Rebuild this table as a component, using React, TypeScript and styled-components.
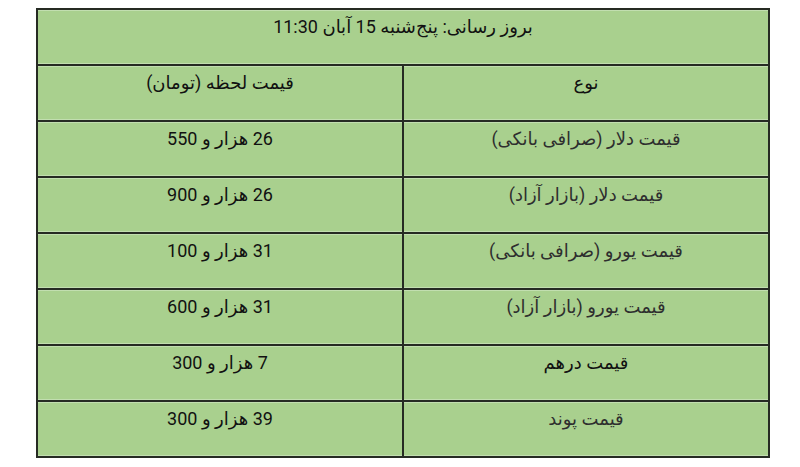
import React from "react";
import styled, { createGlobalStyle } from "styled-components";

const Global = createGlobalStyle`
  html, body { margin: 0; padding: 0; background: #ffffff; }
  body { font-family: Roboto, "DejaVu Sans", sans-serif; }
`;

const Page = styled.div`
  width: 800px;
  height: 467px;
  box-sizing: border-box;
  padding: 8px 0 0 36px;
  background: #ffffff;
`;

const Table = styled.table`
  width: 734px;
  border-collapse: collapse;
  direction: rtl;
  background: #a9d08e;
  border: 2px solid #262b23;
  font-family: Roboto, "DejaVu Sans", sans-serif;
  font-size: 18px;
`;

const Row = styled.tr`
  height: 56px;
`;

const Cell = styled.td<{ $tone?: "dark" | "mid" }>`
  box-sizing: border-box;
  height: 56px;
  width: 50%;
  padding: 4px 8px 0;
  vertical-align: top;
  text-align: center;
  line-height: 26px;
  border: 2px solid #262b23;
  box-shadow: inset 0 1px 0 #c2deb0, inset 0 -1px 0 #c2deb0;
  color: ${(p) => (p.$tone === "mid" ? "#2e2e2e" : "#111111")};
`;

const rows: { name: string; price: string; tone?: "dark" | "mid" }[] = [
  { name: "قیمت دلار (صرافی بانکی)", price: "26 هزار و 550", tone: "mid" },
  { name: "قیمت دلار (بازار آزاد)", price: "26 هزار و 900", tone: "mid" },
  { name: "قیمت یورو (صرافی بانکی)", price: "31 هزار و 100", tone: "mid" },
  { name: "قیمت یورو (بازار آزاد)", price: "31 هزار و 600", tone: "mid" },
  { name: "قیمت درهم", price: "7 هزار و 300", tone: "dark" },
  { name: "قیمت پوند", price: "39 هزار و 300", tone: "mid" },
];

export default function App() {
  return (
    <>
      <Global />
      <Page>
        <Table>
          <tbody>
            <Row>
              <Cell colSpan={2}>بروز رسانی: پنج‌شنبه 15 آبان 11:30</Cell>
            </Row>
            <Row>
              <Cell>نوع</Cell>
              <Cell>قیمت لحظه (تومان)</Cell>
            </Row>
            {rows.map((r) => (
              <Row key={r.name}>
                <Cell $tone={r.tone}>{r.name}</Cell>
                <Cell>{r.price}</Cell>
              </Row>
            ))}
          </tbody>
        </Table>
      </Page>
    </>
  );
}
